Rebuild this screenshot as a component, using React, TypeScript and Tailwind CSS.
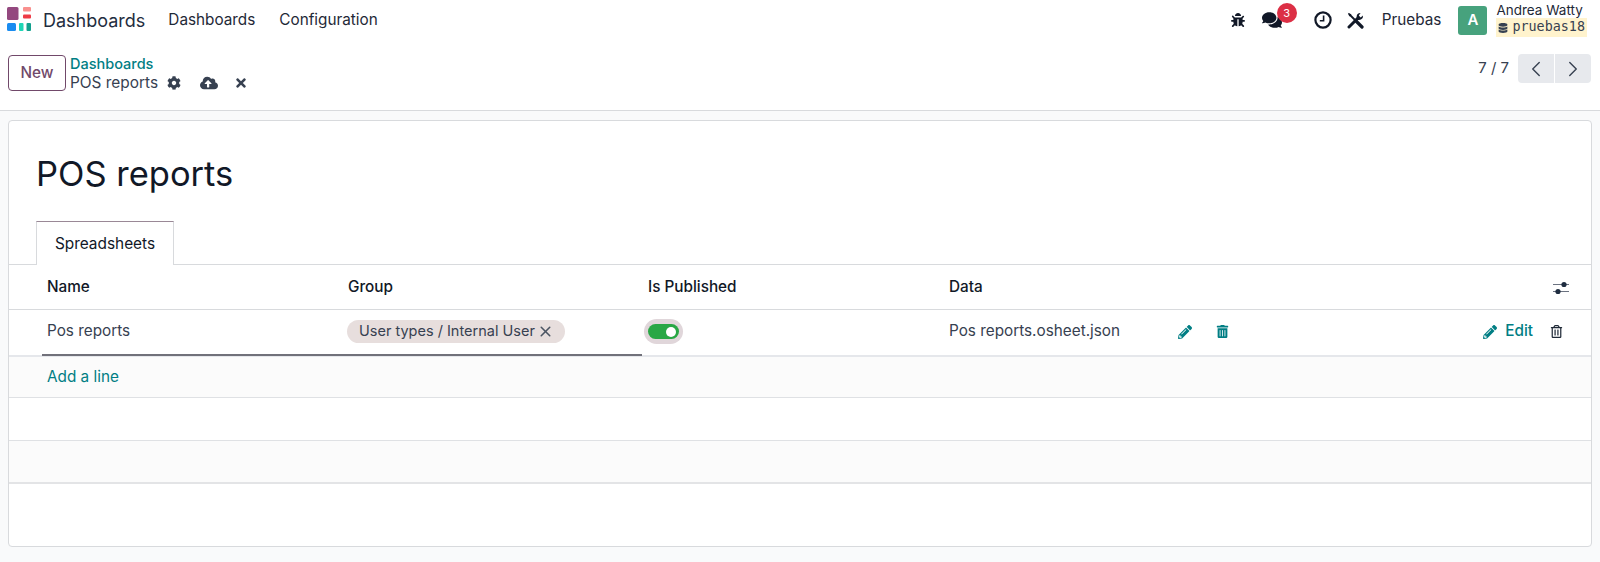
import { FaBug, FaComments, FaCog, FaCloudUploadAlt, FaTimes, FaPencilAlt, FaTrashAlt, FaRegTrashAlt, FaDatabase } from "react-icons/fa";
import { ChevronLeft, ChevronRight, X } from "lucide-react";

function Logo() {
  return (
    <svg width="26" height="26" viewBox="0 0 26 26" className="shrink-0">
      <rect x="0" y="0" width="11.5" height="13" rx="1.5" fill="#94487f" />
      <rect x="16" y="0" width="8" height="4.5" rx="1" fill="#f9908e" />
      <rect x="16" y="7.5" width="8" height="4" rx="1" fill="#ee3a45" />
      <rect x="0" y="16" width="9" height="8" rx="1.5" fill="#1a8cf0" />
      <rect x="12" y="16" width="4.5" height="8" rx="1" fill="#1ed6b5" />
      <rect x="19.5" y="16" width="4.5" height="8" rx="1" fill="#12a08d" />
    </svg>
  );
}

function Sliders() {
  return (
    <svg width="18" height="16" viewBox="0 0 18 16" fill="none">
      <path d="M1 4.5H17M1 11.5H17" stroke="#6b7280" strokeWidth="1.2" />
      <circle cx="12" cy="4.5" r="2.6" fill="#1f2d40" />
      <circle cx="6" cy="11.5" r="2.6" fill="#1f2d40" />
    </svg>
  );
}

function ClockIcon() {
  return (
    <svg width="18" height="18" viewBox="0 0 18 18" fill="none" className="ml-[32px]">
      <circle cx="9" cy="9" r="7.6" stroke="#111827" strokeWidth="2.2" />
      <path d="M9.6 4.6V9.8H5.8" stroke="#111827" strokeWidth="1.6" />
    </svg>
  );
}

function ToolsIcon() {
  return (
    <svg width="17" height="17" viewBox="0 0 17 17" fill="none" className="ml-[15px]">
      <path d="M2 2L9 9" stroke="#111827" strokeWidth="1.8" />
      <path d="M8.5 8.5L15 15" stroke="#111827" strokeWidth="3.2" strokeLinecap="round" />
      <path d="M0.8 0.8L4.5 2.5L2.5 4.5Z" fill="#111827" />
      <path d="M2 15L11 6" stroke="#111827" strokeWidth="3" strokeLinecap="round" />
      <path d="M16 3.4A4 4 0 0 1 10 7.4L9.6 5A4 4 0 0 1 13.6 1L11.8 3.4L13.6 5.4Z" fill="#111827" />
    </svg>
  );
}

function TopBar() {
  return (
    <div className="flex h-[40px] items-center bg-white pl-[7px] pr-[13px] text-[#1f2937]">
      <Logo />
      <span className="ml-[10px] text-[18px] text-[#1f2d40]">Dashboards</span>
      <span className="ml-[23px] text-[15.3px]">Dashboards</span>
      <span className="ml-[24px] text-[15.3px]">Configuration</span>
      <div className="ml-auto flex items-center">
        <FaBug size={14} className="text-[#111827]" />
        <div className="relative ml-[17px]">
          <FaComments size={20} className="text-[#111827]" />
          <span className="absolute -right-[15px] -top-[7px] flex h-[20px] w-[20px] items-center justify-center rounded-full bg-[#dc2f45] text-[11px] text-white">
            3
          </span>
        </div>
        <ClockIcon />
        <ToolsIcon />
        <span className="ml-[18px] text-[15.3px]">Pruebas</span>
        <div className="ml-[17px] flex h-[29px] w-[29px] items-center justify-center rounded-[3px] bg-[#47a27d] text-[15px] font-semibold text-white">
          A
        </div>
        <div className="ml-[9px] flex flex-col items-start">
          <span className="text-[13.5px] leading-[15px]">Andrea Watty</span>
          <span className="flex h-[19px] items-center gap-[4px] bg-[#fff3cd] pl-[2px] pr-[2px] font-['DejaVu_Sans_Mono',monospace] text-[13.4px] text-[#374151]">
            <FaDatabase size={10} />
            pruebas18
          </span>
        </div>
      </div>
    </div>
  );
}

function ControlPanel() {
  return (
    <div className="flex h-[71px] items-start border-b border-[#d8dadd] bg-white pl-[8px] pr-[9px] text-[#374151]">
      <button className="mt-[15px] h-[36px] w-[58px] rounded-[4px] border border-[#71496a] text-[15.3px] font-medium text-[#71496a]">
        New
      </button>
      <div className="ml-[4px] mt-[14px] flex flex-col">
        <span className="text-[14.5px] font-medium leading-[19px] text-[#017e84]">Dashboards</span>
        <div className="flex h-[20px] items-center">
          <span className="text-[15.4px]">POS reports</span>
          <FaCog size={14} className="ml-[9px] text-[#374151]" />
          <FaCloudUploadAlt size={18} className="ml-[19px] text-[#374151]" />
          <FaTimes size={14} className="ml-[16px] text-[#374151]" />
        </div>
      </div>
      <div className="ml-auto mt-[14px] flex items-center">
        <span className="text-[15px]">7 / 7</span>
        <div className="ml-[9px] flex h-[29px] gap-px">
          <div className="flex w-[36px] items-center justify-center rounded-l-[4px] bg-[#e7e9ed]">
            <ChevronLeft size={26} strokeWidth={1.3} />
          </div>
          <div className="flex w-[36px] items-center justify-center rounded-r-[4px] bg-[#e7e9ed]">
            <ChevronRight size={26} strokeWidth={1.3} />
          </div>
        </div>
      </div>
    </div>
  );
}

function LinesTable() {
  return (
    <div className="text-[15.3px] text-[#374151]">
      <div className="grid h-[45px] grid-cols-[301px_300px_301px_1fr] items-center border-b border-[#d8dadd] pl-[32px] pr-[15px] pt-[1px] font-medium text-[#111827]">
        <span className="px-[6px]">Name</span>
        <span className="px-[6px]">Group</span>
        <span className="px-[6px]">Is Published</span>
        <div className="flex items-center justify-between px-[6px]">
          <span>Data</span>
          <Sliders />
        </div>
      </div>
      <div className="grid h-[45px] grid-cols-[301px_300px_301px_1fr] items-center pl-[32px] pr-[22px]">
        <span className="px-[6px] pb-[2px]">Pos reports</span>
        <div className="-ml-[300px] flex h-full translate-y-px items-center border-b-2 border-[#71717a] pb-[3px] pl-[305px]">
          <span className="flex h-[23px] items-center rounded-full bg-[#e7dedd] pl-[12px] pr-[11px] text-[14.5px] text-[#374151]">
            User types / Internal User
            <X size={17} strokeWidth={2.2} className="ml-[2px] text-[#4b5563]" />
          </span>
        </div>
        <div className="px-[6px] pb-[2px]">
          <div className="-ml-[4px] flex h-[25px] w-[39px] items-center justify-center rounded-full bg-[#e0d6da]">
            <div className="flex h-[15px] w-[31px] items-center justify-end rounded-full bg-[#28a745] pr-[3px]">
              <div className="h-[10px] w-[10px] rounded-full bg-white" />
            </div>
          </div>
        </div>
        <div className="flex items-center px-[6px] pb-[2px]">
          <span>Pos reports.osheet.json</span>
          <FaPencilAlt size={14} className="ml-[58px] text-[#017e84]" />
          <FaTrashAlt size={13} className="ml-[24px] text-[#017e84]" />
          <FaPencilAlt size={14} className="ml-auto text-[#017e84]" />
          <span className="ml-[8px] font-medium text-[#017e84]">Edit</span>
          <FaRegTrashAlt size={13} className="ml-[17px] text-[#1f2937]" />
        </div>
      </div>
      <div className="flex h-[43px] items-center border-b border-[#dfe1e4] border-t-2 border-t-[#e5e7eb] bg-[#fbfbfb] pl-[38px] text-[#017e84]">
        Add a line
      </div>
      <div className="h-[43px] border-b border-[#dfe1e4]" />
      <div className="h-[43px] border-b-2 border-[#e3e4e6] bg-[#fbfbfb]" />
    </div>
  );
}

export default function App() {
  return (
    <div className="flex h-[562px] flex-col overflow-hidden bg-[#f9fafb] font-['Inter',sans-serif]">
      <TopBar />
      <ControlPanel />
      <div className="mx-[8px] mt-[9px] h-[427px] rounded-[4px] border border-[#d8dadd] bg-white">
        <h1 className="ml-[27px] mt-[31px] text-[34.5px] font-normal leading-[44px] text-[#111827]">POS reports</h1>
        <div className="mt-[24px] flex h-[45px] items-end border-b border-[#d8dadd] pl-[27px]">
          <div className="-mb-px flex h-[44px] w-[138px] items-center justify-center border border-b-0 border-[#d8dadd] border-t-[#9a8896] bg-white text-[15.4px] text-[#111827]">
            Spreadsheets
          </div>
        </div>
        <LinesTable />
      </div>
    </div>
  );
}
